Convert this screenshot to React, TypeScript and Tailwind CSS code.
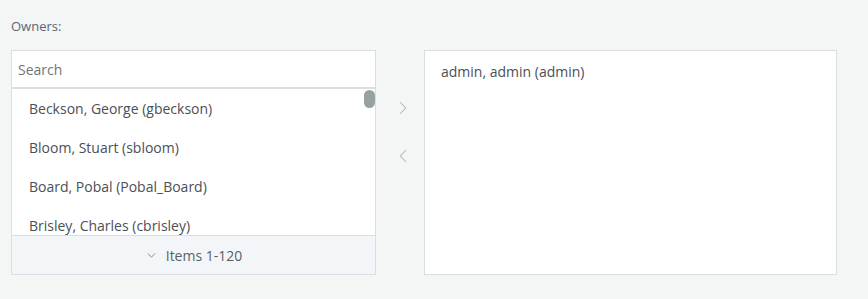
import { ChevronDown, ChevronLeft, ChevronRight } from "lucide-react";

const USERS = [
  "Beckson, George (gbeckson)",
  "Bloom, Stuart (sbloom)",
  "Board, Pobal (Pobal_Board)",
  "Brisley, Charles (cbrisley)",
];

export default function App() {
  return (
    <div
      className="w-[868px] h-[299px] bg-[#f4f5f5] text-[14px] text-[#4b4f56] overflow-hidden"
      style={{ fontFamily: '"Open Sans", "Noto Sans", sans-serif' }}
    >
      <div className="pl-[11px] pt-[16px] h-[50px]">
        <p className="text-[13px] text-[#5f6670] leading-[20px]">Owners:</p>
      </div>
      <div className="flex flex-row pl-[11px]">
        {/* source list */}
        <div className="w-[365px] flex flex-col">
          <div className="h-[38px] bg-white border border-[#d9dee2] flex items-center px-[6px]">
            <input
              placeholder="Search"
              className="w-full outline-none text-[14px] placeholder:text-[#70757b] bg-transparent"
            />
          </div>
          <div className="relative h-[147px] bg-white border-x border-t border-[#d9dee2] overflow-hidden">
            {USERS.map((u) => (
              <div key={u} className="h-[39px] flex items-center pl-[17px]">
                {u}
              </div>
            ))}
            <div className="absolute right-0 top-[1px] w-[11px] h-[18px] rounded-full bg-[#97a1a1]" />
          </div>
          <div className="h-[40px] bg-[#f3f6f8] border border-[#d9dee2] flex items-center justify-center gap-[8px] text-[#5a5f66]">
            <ChevronDown className="w-[13px] h-[13px] text-[#6d7279]" strokeWidth={1.5} />
            <span>Items 1-120</span>
          </div>
        </div>

        {/* move buttons */}
        <div className="w-[48px] flex flex-col items-center pl-[6px] pt-[46px] gap-[24px] text-[#aab0b4]">
          <div className="w-[30px] h-[24px] flex items-center justify-center">
            <ChevronRight className="w-[22px] h-[22px]" strokeWidth={1.1} />
          </div>
          <div className="w-[30px] h-[24px] flex items-center justify-center">
            <ChevronLeft className="w-[22px] h-[22px]" strokeWidth={1.1} />
          </div>
        </div>

        {/* target list */}
        <div className="w-[413px] h-[225px] bg-white border border-[#d9dee2] pl-[16px] pt-[11px]">
          <div className="leading-[20px]">admin, admin (admin)</div>
        </div>
      </div>
    </div>
  );
}
